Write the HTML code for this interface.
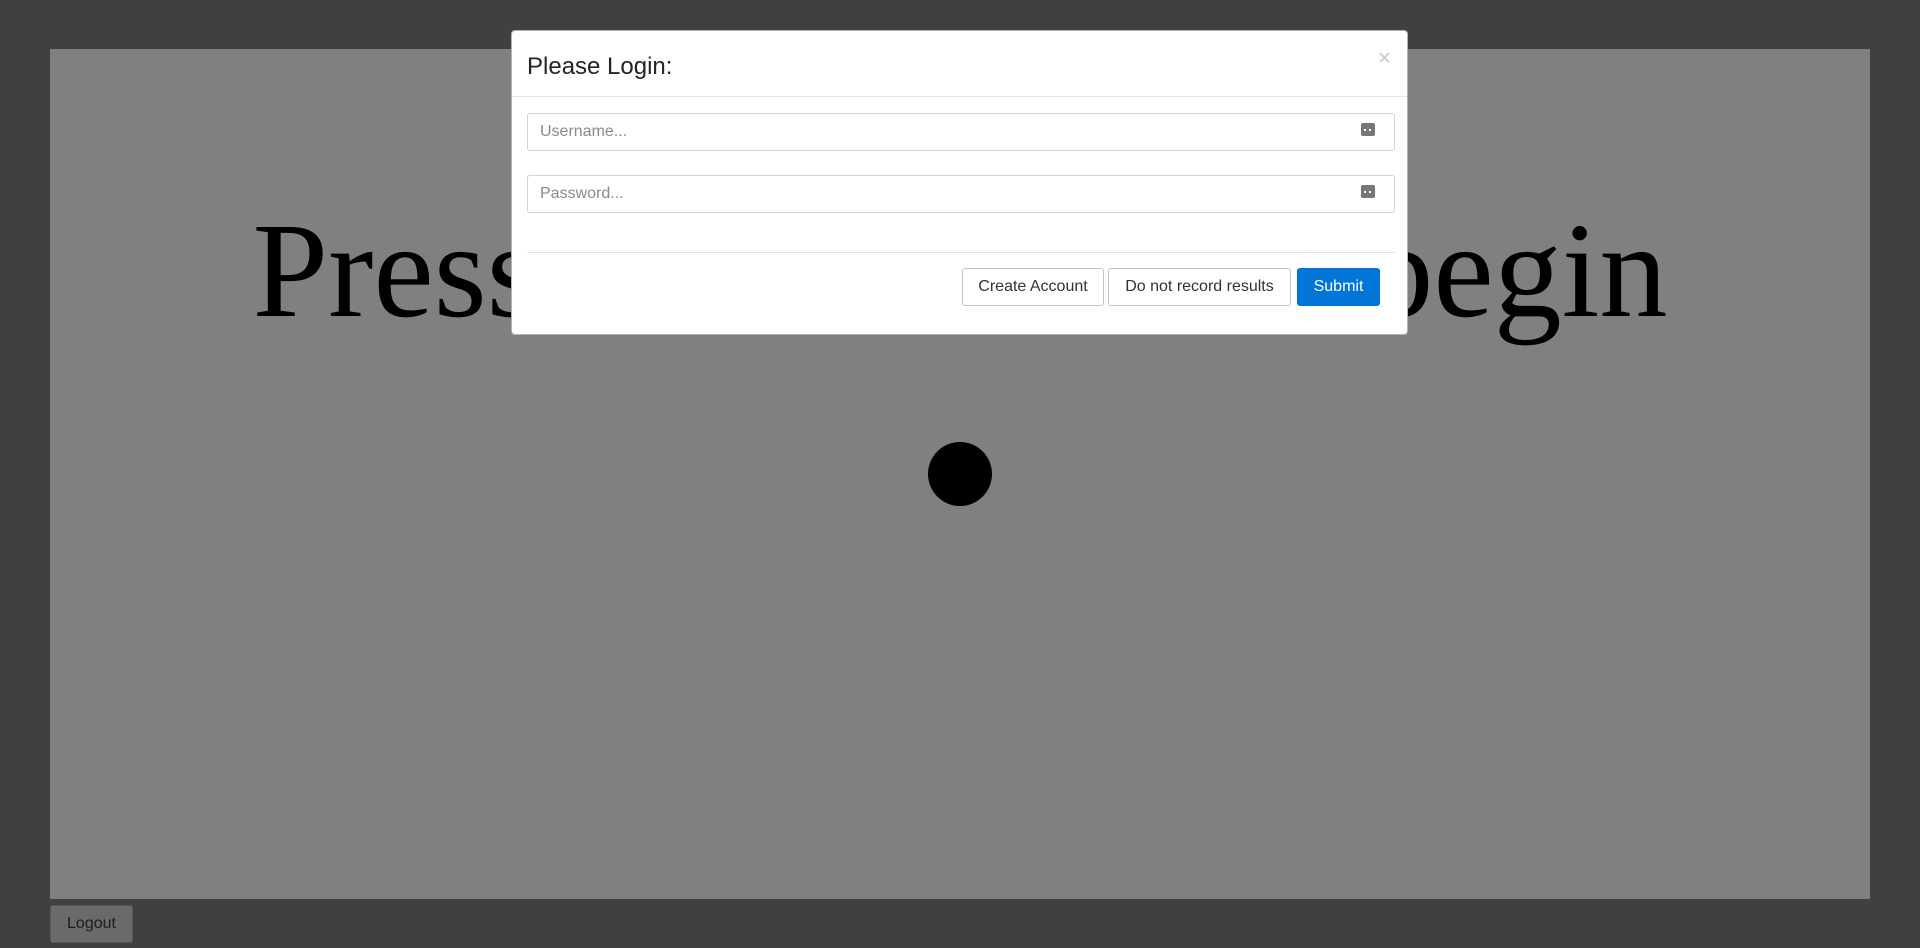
<!DOCTYPE html>
<html><head><meta charset="utf-8"><style>
*{box-sizing:border-box;margin:0;padding:0}
body{width:1920px;height:948px;background:#404040;position:relative;overflow:hidden;font-family:"Liberation Sans",sans-serif}
#canvas{position:absolute;left:50px;top:49px;width:1820px;height:850px;background:#808080;overflow:hidden}
#big{position:absolute;left:0;width:1820px;top:154px;text-align:center;font-family:"Liberation Serif",serif;font-size:136px;line-height:136px;color:#000;white-space:nowrap;word-spacing:44px}
#dot{position:absolute;left:878px;top:393px;width:64px;height:64px;border-radius:50%;background:#000}
#logout{position:absolute;left:50px;top:905px;width:83px;height:38px;background:#6a6a6a;border:1px solid #5a5a5a;border-radius:3px;color:#1e1e1e;font-size:16px;line-height:36px;text-align:center}
#modal{position:absolute;left:511px;top:30px;width:897px;height:305px;background:#fff;border:1px solid rgba(0,0,0,.3);border-radius:4px}
#title{position:absolute;left:15px;top:22px;font-size:24px;color:#212529}
#close{position:absolute;left:866px;top:14px;font-size:22px;color:#c8c8c8}
#hd{position:absolute;left:0;right:0;top:65px;border-top:1px solid #e5e5e5}
.inp{position:absolute;left:15px;width:868px;height:38px;border:1px solid #ced4da;border-radius:3px;color:#8a8a8a;font-size:16px;line-height:36px;padding-left:12px}
.ic{position:absolute;left:833px;top:9px;width:14px;height:13px;background:#777;border-radius:2px}
.ic:after{content:"";position:absolute;left:3px;top:6px;width:7px;height:2px;border-top:2px dotted #fff}
#fd{position:absolute;left:15px;width:868px;top:221px;border-top:1px solid #e2e2e2}
.btn{position:absolute;top:237px;height:38px;border:1px solid #c4c4c4;border-radius:3px;font-size:16px;line-height:36px;text-align:center;color:#333;background:#fff}
</style></head><body>
<div id="canvas"><div id="big">Press a button to begin</div><div id="dot"></div></div>
<div id="logout">Logout</div>
<div id="modal">
<div id="title">Please Login:</div>
<div id="close">×</div>
<div id="hd"></div>
<div class="inp" style="top:82px">Username...<div class="ic"></div></div>
<div class="inp" style="top:144px">Password...<div class="ic"></div></div>
<div id="fd"></div>
<div class="btn" style="left:450px;width:142px">Create Account</div>
<div class="btn" style="left:596px;width:183px">Do not record results</div>
<div class="btn" style="left:785px;width:83px;background:#0275d8;border-color:#0275d8;color:#fff">Submit</div>
</div>
</body></html>
